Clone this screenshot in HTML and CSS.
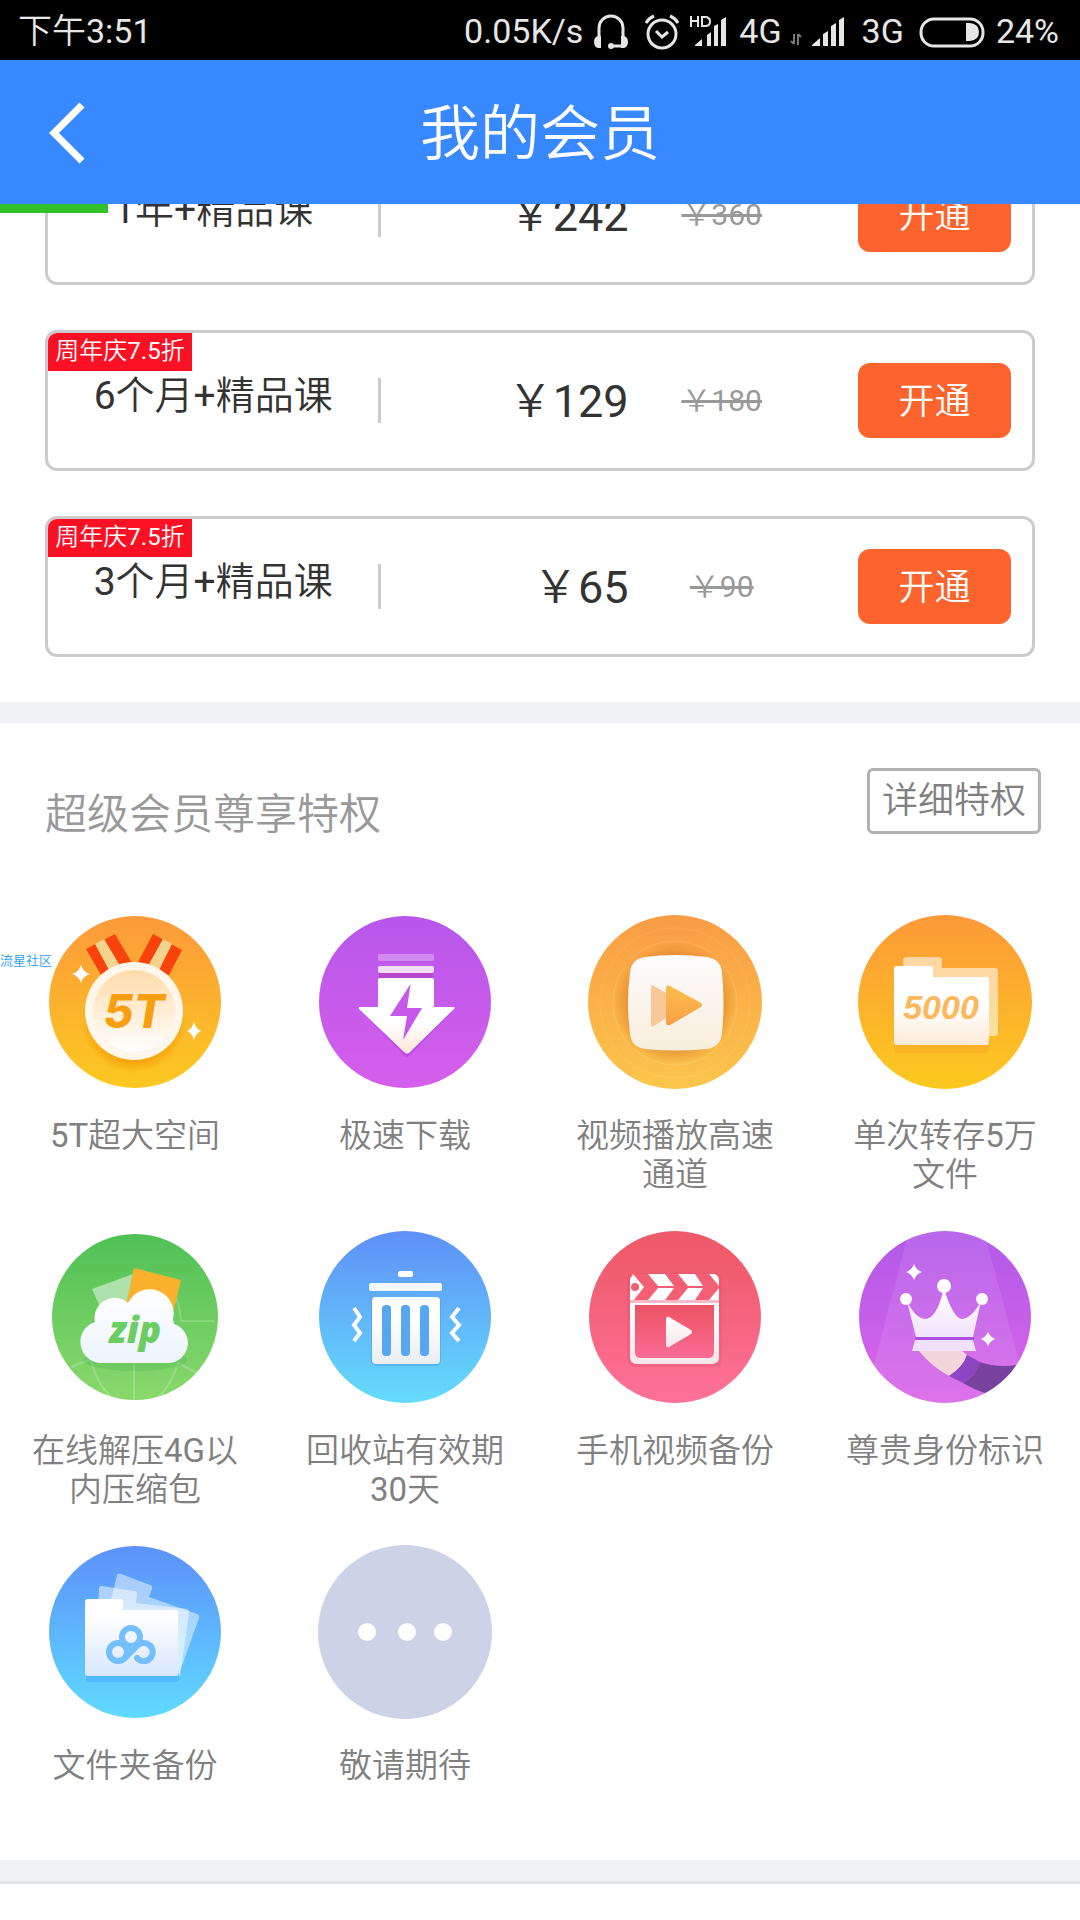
FILE: index.html
```html
<!DOCTYPE html>
<html lang="zh-CN">
<head>
  <meta charset="UTF-8">
  <meta name="viewport" content="width=device-width, initial-scale=1.0">
  <title>我的会员</title>
  <link rel="stylesheet" href="styles.css">
</head>
<body>
  <!-- 状态栏 -->
  <div class="status">
    <span class="time">下午3:51</span>
    <div class="status-right">
      <span>0.05K/s</span>
      <svg width="42" height="36" viewBox="0 0 42 36">
        <path d="M6 25V14a12 12 0 0 1 24 0v11M19 32h12" fill="none" stroke="#e6e6e6" stroke-width="3"/>
        <path d="M5 22h3v12H5q-4-1-4-6t4-6zM31 22h-3v12h3q4-1 4-6t-4-6z" fill="#e6e6e6"/>
        <circle cx="18" cy="32" r="3" fill="#e6e6e6"/>
      </svg>
      <svg width="34" height="36" viewBox="0 0 34 36">
        <circle cx="17" cy="20" r="14" fill="none" stroke="#e6e6e6" stroke-width="3"/>
        <path d="M11 17l6 6 6-5M1 9q3-5 8-7M33 9q-3-5-8-7" fill="none" stroke="#e6e6e6" stroke-width="3"/>
      </svg>
      <svg width="40" height="36" viewBox="0 0 40 36">
        <path d="M2 2v11M9 2v11M2 7h7M13 3v9h3q5 0 5-4.500t-5-4.500z" fill="none" stroke="#e6e6e6" stroke-width="2"/>
        <path d="M6 32v-1l7-6v7zM18 32V21l4-3v14zM25 32V12l4-2v22zM32 32V6l5-3v29z" fill="#e6e6e6"/>
      </svg>
      <span class="net">4G</span>
      <svg width="12" height="36" viewBox="0 0 12 36">
        <path d="M4 20v10M1 27l3 3M8 31V20M8 20l3 3" fill="none" stroke="#777" stroke-width="2"/>
      </svg>
      <svg width="40" height="36" viewBox="0 0 40 36">
        <path d="M0 32v-1l8-7v8zM11 32V20l5-3v15zM19 32V12l5-3v23zM27 32V6l5-3v29z" fill="#e6e6e6"/>
      </svg>
      <span class="net">3G</span>
      <svg width="74" height="36" viewBox="0 0 74 36">
        <rect x="9" y="5" width="62" height="27" rx="13" fill="none" stroke="#e6e6e6" stroke-width="3"/>
        <path d="M54 9h4q9 1 9 9t-9 9h-4z" fill="#e6e6e6"/>
      </svg>
      <span>24%</span>
    </div>
  </div>

  <!-- 标题栏 -->
  <header class="header">
    <a href="#" class="back" aria-label="返回">
      <svg width="42" height="66" viewBox="0 0 42 66">
        <path d="M34 5L6 33l28 28" fill="none" stroke="#fff" stroke-width="7"/>
      </svg>
    </a>
    <h1>我的会员</h1>
  </header>

  <main class="main">
    <div class="progress"></div>

    <!-- 套餐 -->
    <ul class="plans">
      <li class="plan">
        <span class="name">1年+精品课</span>
        <i class="line"></i>
        <span class="price">￥242</span>
        <del class="old">￥360</del>
        <button type="button" class="buy">开通</button>
      </li>
      <li class="plan">
        <span class="tag">周年庆7.5折</span>
        <span class="name">6个月+精品课</span>
        <i class="line"></i>
        <span class="price">￥129</span>
        <del class="old">￥180</del>
        <button type="button" class="buy">开通</button>
      </li>
      <li class="plan">
        <span class="tag">周年庆7.5折</span>
        <span class="name">3个月+精品课</span>
        <i class="line"></i>
        <span class="price">￥65</span>
        <del class="old">￥90</del>
        <button type="button" class="buy">开通</button>
      </li>
    </ul>

    <!-- 特权 -->
    <section class="rights">
      <span class="mark">流星社区</span>
      <div class="rights-head">
        <h2>超级会员尊享特权</h2>
        <button type="button" class="detail">详细特权</button>
      </div>
      <ul class="grid">
        <li class="item">
          <svg class="icon" viewBox="0 0 180 180">
            <defs>
              <linearGradient id="g1" x1="0" y1="0" x2="0" y2="1"><stop offset="0" stop-color="#fc9a3b"/><stop offset="1" stop-color="#fcc920"/></linearGradient>
              <linearGradient id="g1b" x1="0" y1="0" x2="0" y2="1"><stop offset="0" stop-color="#ffdcab"/><stop offset="1" stop-color="#fff"/></linearGradient>
              <radialGradient id="g1s"><stop offset=".75" stop-color="#f59a00" stop-opacity=".8"/><stop offset="1" stop-color="#f59a00" stop-opacity="0"/></radialGradient>
            </defs>
            <circle cx="90" cy="90" r="86" fill="url(#g1)"/>
            <circle cx="89" cy="109" r="52" fill="url(#g1s)"/>
            <path d="M41 37l29-15 17 29-31 12z" fill="#f9430c"/>
            <path d="M50 32l9-5 15 25-10 6z" fill="#f4d48c"/>
            <path d="M108 22l29 16-13 25-31-13z" fill="#f9430c"/>
            <path d="M118 27l9 5-13 26-10-6z" fill="#f4d48c"/>
            <circle cx="89" cy="99" r="49" fill="#fff7eb"/>
            <circle cx="89" cy="99" r="41" fill="url(#g1b)"/>
            <text x="89" y="116" class="t-medal">5T</text>
            <path d="M36 53q2 7 9 9-7 2-9 9-2-7-9-9 7-2 9-9zM149 110q2 7 7 9-5 2-7 9-2-7-7-9 5-2 7-9z" fill="#fff"/>
          </svg>
          <p>5T超大空间</p>
        </li>
        <li class="item">
          <svg class="icon" viewBox="0 0 180 180">
            <defs>
              <linearGradient id="g2" x1="0" y1="0" x2="0" y2="1"><stop offset="0" stop-color="#b657ea"/><stop offset="1" stop-color="#d65eec"/></linearGradient>
              <linearGradient id="g2b" x1="0" y1="0" x2="0" y2="1"><stop offset=".6" stop-color="#fff"/><stop offset="1" stop-color="#fde6d6"/></linearGradient>
            </defs>
            <circle cx="90" cy="90" r="86" fill="url(#g2)"/>
            <rect x="63" y="42" width="56" height="7" rx="2" fill="#fff" opacity=".3"/>
            <rect x="63" y="54" width="56" height="7" rx="2" fill="#fff" opacity=".8"/>
            <rect x="64" y="61" width="54" height="5" fill="#b649cb"/>
            <path d="M46 99h92l-42 43q-4 6-8 0z" fill="#a93be2" opacity=".5"/>
            <path d="M65 66h52q2 0 2 2v27h19q3 0 1 2l-44 43q-3 3-6 0L44 97q-1-2 1-2h18V68q0-2 2-2z" fill="url(#g2b)"/>
            <path d="M95.500 72L92 96h15l-19 32 4-24H75z" fill="#c557ea"/>
          </svg>
          <p>极速下载</p>
        </li>
        <li class="item">
          <svg class="icon" viewBox="0 0 180 180">
            <defs>
              <linearGradient id="g3" x1="0" y1="0" x2="0" y2="1"><stop offset="0" stop-color="#fa9c44"/><stop offset="1" stop-color="#fbc64c"/></linearGradient>
              <linearGradient id="g3b" x1="0" y1="0" x2="0" y2="1"><stop offset="0" stop-color="#fdfbff"/><stop offset="1" stop-color="#f8eedb"/></linearGradient>
              <linearGradient id="g3c" x1="0" y1="0" x2="0" y2="1"><stop offset="0" stop-color="#fabf4c"/><stop offset="1" stop-color="#fa9f48"/></linearGradient>
              <radialGradient id="g3s"><stop offset=".72" stop-color="#dc7f28" stop-opacity=".7"/><stop offset="1" stop-color="#dc7f28" stop-opacity="0"/></radialGradient>
            </defs>
            <circle cx="90" cy="90" r="87" fill="url(#g3)"/>
            <circle cx="90" cy="91" r="75" fill="none" stroke="#fff" opacity=".08"/>
            <circle cx="90" cy="91" r="62" fill="none" stroke="#fff" opacity=".12"/>
            <circle cx="90" cy="91" r="61" fill="url(#g3s)"/>
            <path d="M60 45q31-4 62 0 14 2 15 16 3 30 0 60-1 14-15 16-31 3-62 0-14-2-15-16-4-30 0-60 1-14 15-16z" fill="url(#g3b)"/>
            <path d="M66 75q0-3 3-1l14 8v23l-14 9q-3 2-3-1z" fill="#f9c89a"/>
            <path d="M81 76q0-4 4-2l31 17q2 2 0 4l-31 18q-4 1-4-2z" fill="url(#g3c)"/>
          </svg>
          <p>视频播放高速通道</p>
        </li>
        <li class="item">
          <svg class="icon" viewBox="0 0 180 180">
            <defs>
              <linearGradient id="g4" x1="0" y1="0" x2="0" y2="1"><stop offset="0" stop-color="#fc9938"/><stop offset="1" stop-color="#fcc91f"/></linearGradient>
              <linearGradient id="g4b" x1="0" y1="0" x2="0" y2="1"><stop offset=".5" stop-color="#fff"/><stop offset="1" stop-color="#fdead8"/></linearGradient>
            </defs>
            <circle cx="90" cy="90" r="87" fill="url(#g4)"/>
            <path d="M51 45h33q3 0 3 3v8h53q3 0 3 3v62q0 3-3 3H51q-3 0-3-3V48q0-3 3-3z" fill="#fff" opacity=".55"/>
            <rect x="39" y="130" width="95" height="11" rx="3" fill="#f9a825" opacity=".5"/>
            <path d="M42 54h33q3 0 3 3v8h53q3 0 3 3v62q0 3-3 3H42q-3 0-3-3V57q0-3 3-3z" fill="url(#g4b)"/>
            <text x="86" y="107" class="t-count">5000</text>
          </svg>
          <p>单次转存5万文件</p>
        </li>
        <li class="item">
          <svg class="icon" viewBox="0 0 180 180">
            <defs>
              <linearGradient id="g5" x1="0" y1="0" x2="0" y2="1"><stop offset="0" stop-color="#50c156"/><stop offset="1" stop-color="#8ad86b"/></linearGradient>
              <linearGradient id="g5b" gradientUnits="userSpaceOnUse" x1="0" y1="60" x2="0" y2="136"><stop offset="0" stop-color="#fff"/><stop offset="1" stop-color="#edf4fe"/></linearGradient>
            </defs>
            <circle cx="90" cy="90" r="83" fill="url(#g5)"/>
            <path d="M89 136v37M46 134q6 22 19 35M133 136q-6 20-19 34M133 136l19 10M26 140l20-8M136 94h33M129 65q6 14 7 29" fill="none" stroke="#fff" stroke-width="2" opacity=".2"/>
            <ellipse cx="90" cy="133" rx="52" ry="11" fill="#3fae4e" opacity=".25"/>
            <path d="M47 62l41-15-4 30-28 5z" fill="#aee2ac"/>
            <path d="M89 41l47 12-7 29H80z" fill="#fbb12d"/>
            <path d="M57 136a21 21 0 0 1-7-41 20 20 0 0 1 33-19 24 24 0 0 1 45 16l1 5a20 20 0 0 1-5 39z" fill="url(#g5b)"/>
            <text x="90" y="116" class="t-zip">zip</text>
          </svg>
          <p>在线解压4G以内压缩包</p>
        </li>
        <li class="item">
          <svg class="icon" viewBox="0 0 180 180">
            <defs>
              <linearGradient id="g6" x1="0" y1="0" x2="0" y2="1"><stop offset="0" stop-color="#5f90f8"/><stop offset="1" stop-color="#64dcfb"/></linearGradient>
              <linearGradient id="g6b" x1="0" y1="0" x2="0" y2="1"><stop offset=".3" stop-color="#fff"/><stop offset="1" stop-color="#e9edf2"/></linearGradient>
            </defs>
            <circle cx="90" cy="90" r="86" fill="url(#g6)"/>
            <rect x="83" y="44" width="15" height="6" rx="2" fill="#fff"/>
            <rect x="54" y="56" width="73" height="8" rx="2" fill="#f5f8fb"/>
            <rect x="56" y="71" width="70" height="68" rx="5" fill="#3d86e0" opacity=".3"/>
            <rect x="57" y="70" width="68" height="67" rx="4" fill="url(#g6b)"/>
            <g fill="#57a6f0">
              <rect x="67" y="78" width="9" height="51" rx="4"/>
              <rect x="86" y="78" width="9" height="51" rx="4"/>
              <rect x="105" y="78" width="9" height="51" rx="4"/>
            </g>
            <path d="M39 81l6 9-6 8 6 8-6 8M144 81l-7 9 7 8-7 8 7 8" fill="none" stroke="#fff" stroke-width="4"/>
          </svg>
          <p>回收站有效期30天</p>
        </li>
        <li class="item">
          <svg class="icon" viewBox="0 0 180 180">
            <defs>
              <linearGradient id="g7" x1="0" y1="0" x2="0" y2="1"><stop offset=".1" stop-color="#ee5a69"/><stop offset="1" stop-color="#ff7199"/></linearGradient>
              <linearGradient id="g7b" x1="0" y1="0" x2="0" y2="1"><stop offset="0" stop-color="#fff"/><stop offset="1" stop-color="#f5e6e9"/></linearGradient>
              <linearGradient id="g7c" x1="0" y1="0" x2="0" y2="1"><stop offset="0" stop-color="#ec5463"/><stop offset="1" stop-color="#fb6b94"/></linearGradient>
            </defs>
            <circle cx="90" cy="90" r="86" fill="url(#g7)"/>
            <rect x="42" y="46" width="95" height="94" rx="8" fill="#c93a52" opacity=".15"/>
            <path d="M51 47h77q6 0 6 6v22H45V53q0-6 6-6z" fill="#f55f75"/>
            <path d="M48 47l11 13-10 13h-4V52z" fill="#fff"/>
            <circle cx="50" cy="60" r="4" fill="#f0606f"/>
            <path d="M63 47h17l9 12H73zM93 47h17l8 12h-15zM124 47h6q4 2 4 6v6zM73 61h16l-9 12H63zM103 61h15l-8 12H93zM134 61v12h-10z" fill="#fff"/>
            <path d="M45 73h89v3H45z" fill="#fdb9c6"/>
            <path d="M45 76h89v54q0 7-7 7H52q-7 0-7-7z" fill="url(#g7b)"/>
            <path d="M50 78h79v47q0 6-6 6H56q-6 0-6-6z" fill="url(#g7c)"/>
            <path d="M81 92q0-3 3-2l22 13q2 2 0 4l-22 13q-3 1-3-2z" fill="url(#g7b)"/>
          </svg>
          <p>手机视频备份</p>
        </li>
        <li class="item">
          <svg class="icon" viewBox="0 0 180 180">
            <defs>
              <linearGradient id="g8" x1="0" y1="0" x2="0" y2="1"><stop offset="0" stop-color="#b159e9"/><stop offset="1" stop-color="#da66e8"/></linearGradient>
              <linearGradient id="g8b" x1="0" y1="0" x2="0" y2="1"><stop offset="0" stop-color="#fff"/><stop offset="1" stop-color="#f1e2fd"/></linearGradient>
              <clipPath id="c8"><circle cx="90" cy="90" r="86"/></clipPath>
            </defs>
            <circle cx="90" cy="90" r="86" fill="url(#g8)"/>
            <g clip-path="url(#c8)">
              <path d="M55 0h73l48 180H8z" fill="#fff" opacity=".09"/>
              <path d="M64 124h43l5 4q-3 12-18 21-18-10-30-25z" fill="#f3d5dc"/>
              <path d="M112 128l13 7q-4 14-17 21l-14-7q14-9 18-21z" fill="#8d45c2"/>
              <path d="M125 135q16 6 37 3l10 40-42-12q-10-3-22-10 13-7 17-21z" fill="#7a429f"/>
            </g>
            <path d="M60 110h59v4H60z" fill="#ad4fe0"/>
            <path d="M52 74q8 17 18 18 11 0 18-27h2q9 27 17 27 10-1 19-18l-8 36H61z" fill="url(#g8b)"/>
            <circle cx="89" cy="59" r="7" fill="#fff"/>
            <circle cx="51" cy="72" r="6" fill="#fff"/>
            <circle cx="127" cy="72" r="6" fill="#fff"/>
            <path d="M60 113h58l3 11H57z" fill="#f0e0fb"/>
            <path d="M59 37q2 6 8 8-6 2-8 8-2-6-8-8 6-2 8-8zM133 105q2 5 7 7-5 2-7 7-2-5-7-7 5-2 7-7z" fill="#fff"/>
          </svg>
          <p>尊贵身份标识</p>
        </li>
        <li class="item">
          <svg class="icon" viewBox="0 0 180 180">
            <defs>
              <linearGradient id="g9" x1="0" y1="0" x2="0" y2="1"><stop offset="0" stop-color="#5d91fb"/><stop offset="1" stop-color="#60daff"/></linearGradient>
              <linearGradient id="g9b" x1="0" y1="0" x2="0" y2="1"><stop offset=".2" stop-color="#fff"/><stop offset="1" stop-color="#d9e6fe"/></linearGradient>
            </defs>
            <circle cx="90" cy="90" r="86" fill="url(#g9)"/>
            <path d="M72 33q1-2 4-1l29 11q3 1 2 4l-3 8 48 17q3 1 2 4l-20 56-78-33z" fill="#fff" opacity=".48"/>
            <path d="M54 47q0-3 3-3l32 5q3 0 3 3l-1 9 51 6q3 1 2 4l-9 63H50z" fill="#fff" opacity=".5"/>
            <rect x="41" y="130" width="93" height="10" rx="3" fill="#3fa4f7" opacity=".4"/>
            <path d="M43 57h32q3 0 3 3v8h52q3 0 3 3v60q0 3-3 3H43q-3 0-3-3V60q0-3 3-3z" fill="url(#g9b)"/>
            <g fill="none" stroke="#74bffd" stroke-width="6">
              <circle cx="86" cy="95" r="9"/>
              <circle cx="73" cy="110" r="9"/>
              <path d="M79 117l13-13a9 9 0 1 1 0 12" stroke-linecap="round"/>
            </g>
          </svg>
          <p>文件夹备份</p>
        </li>
        <li class="item">
          <svg class="icon" viewBox="0 0 180 180">
            <circle cx="90" cy="90" r="87" fill="#cdd3e7"/>
            <g fill="#fff">
              <circle cx="52" cy="90" r="9"/>
              <circle cx="92" cy="90" r="9"/>
              <circle cx="128" cy="90" r="9"/>
            </g>
          </svg>
          <p>敬请期待</p>
        </li>
      </ul>
    </section>
    <div class="foot-line"></div>
  </main>
</body>
</html>
```
FILE: styles.css
```css
* {
  box-sizing: border-box;
}
body, h1, h2, ul, li, p {
  margin: 0;
  padding: 0;
  font-weight: inherit;
}
ul {
  list-style: none;
}
body {
  background: #fff;
  color: #333;
  font-family: Roboto, "Noto Sans CJK SC DemiLight", "Noto Sans CJK SC", sans-serif;
  font-weight: 400;
}
button {
  font-family: inherit;
  font-weight: inherit;
  padding: 0;
  cursor: pointer;
}
/* 状态栏 */
.status {
  display: flex;
  justify-content: space-between;
  align-items: center;
  height: 60px;
  padding: 3px 21px 0 18px;
  background: #000;
  color: #e6e6e6;
  font-size: 34px;
  line-height: 57px;
}
.status-right {
  display: flex;
  align-items: center;
  gap: 10px;
}
.net {
  margin-right: -2px;
}
/* 标题栏 */
.header {
  position: relative;
  height: 144px;
  background: #3888ff;
  color: #fff;
  text-align: center;
}
.header h1 {
  padding-top: 6px;
  font-size: 60px;
  line-height: 138px;
}
.back {
  position: absolute;
  left: 48px;
  top: 40px;
}
.back svg {
  display: block;
}
.main {
  position: relative;
  overflow: hidden;
}
/* 加载进度 */
.progress {
  position: absolute;
  left: 0;
  top: 0;
  z-index: 1;
  width: 10%;
  height: 9px;
  background: #33c129;
}
/* 套餐，向上滚动了一段 */
.plans {
  display: flex;
  flex-direction: column;
  gap: 45px;
  margin-top: -60px;
  padding: 0 45px 45px;
}
.plan {
  position: relative;
  display: grid;
  grid-template-columns: 33fr 3px 25fr 18fr 22fr;
  align-items: center;
  height: 141px;
  border: 3px solid #ccc;
  border-radius: 12px;
  overflow: hidden;
}
.tag {
  position: absolute;
  left: 0;
  top: 0;
  width: 144px;
  height: 38px;
  background: #fc1023;
  color: #fff;
  font-size: 24px;
  line-height: 36px;
  text-align: center;
}
.name {
  padding-bottom: 9px;
  font-size: 39px;
  line-height: 48px;
  text-align: center;
}
.line {
  height: 45px;
  background: #ccc;
}
.price {
  padding: 3px 3px 0 0;
  font-size: 45px;
  line-height: 54px;
  text-align: right;
}
.old {
  color: #999;
  font-size: 30px;
  line-height: 36px;
  text-align: center;
  text-decoration-thickness: 3px;
}
.buy {
  justify-self: end;
  width: 153px;
  height: 75px;
  margin-right: 21px;
  padding-bottom: 6px;
  border: 0;
  border-radius: 12px;
  background: #fd632c;
  color: #fff;
  font-size: 36px;
}
/* 特权 */
.rights {
  position: relative;
  padding-bottom: 3px;
  border-top: 21px solid #f0f1f5;
}
.mark {
  position: absolute;
  left: 0;
  top: 228px;
  color: #2b9df5;
  font-size: 13px;
  line-height: 20px;
}
.rights-head {
  display: flex;
  justify-content: space-between;
  padding: 45px 39px 78px 45px;
}
.rights-head h2 {
  height: 66px;
  color: #999;
  font-size: 42px;
  line-height: 94px;
}
.detail {
  height: 66px;
  padding: 0 12px;
  border: 3px solid #b2b2b2;
  border-radius: 6px;
  background: #fff;
  color: #808080;
  font-size: 36px;
  line-height: 54px;
}
.grid {
  display: grid;
  grid-template-columns: repeat(4, 1fr);
  grid-auto-rows: minmax(315px, auto);
}
.item {
  padding: 0 30px;
  color: #808080;
  font-size: 33px;
  line-height: 39px;
  text-align: center;
}
.icon {
  display: block;
  width: 180px;
  height: 180px;
  margin: 0 auto 24px;
}
.t-medal, .t-count, .t-zip {
  font-family: Inter, sans-serif;
  font-weight: 800;
  font-style: italic;
  text-anchor: middle;
}
.t-medal {
  font-size: 46px;
  fill: #f99f0f;
}
.t-count {
  font-family: "Liberation Sans", sans-serif;
  font-size: 34px;
  fill: #fcb85c;
}
.t-zip {
  font-family: "Open Sans", sans-serif;
  font-size: 37px;
  fill: #6ace62;
}
.foot-line {
  height: 24px;
  background: #f0f1f5;
  border-bottom: 3px solid #e3e4e8;
}
```
